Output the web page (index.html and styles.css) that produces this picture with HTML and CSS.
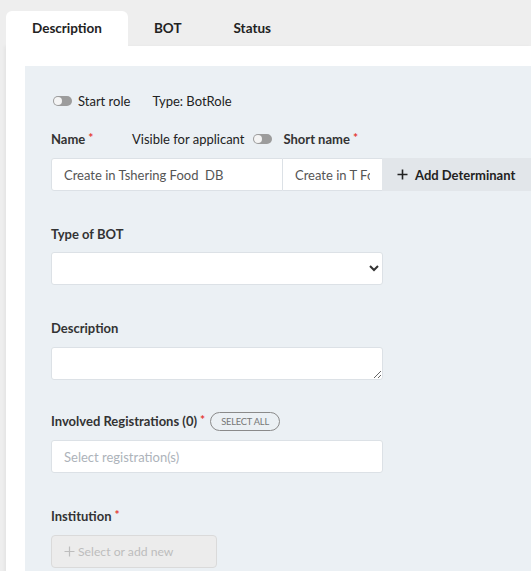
FILE: index.html
```html
<!DOCTYPE html>
<html>
<head>
<meta charset="utf-8">
<link rel="stylesheet" href="styles.css">
</head>
<body>
<div class="tabs">
  <div class="tab active">Description</div>
  <div class="tab">BOT</div>
  <div class="tab">Status</div>
</div>
<div class="card">
  <div class="panel">
    <div class="row toggles">
      <span class="toggle"></span><span class="tlabel">Start role</span>
      <span class="type">Type: BotRole</span>
    </div>
    <div class="row labels2">
      <span class="label l-name">Name<span class="req">*</span></span>
      <span class="vis">Visible for applicant</span><span class="toggle t2"></span>
      <span class="label l-short">Short name<span class="req">*</span></span>
    </div>
    <div class="inputs">
      <input class="inp name" type="text" value="Create in Tshering Food  DB">
      <input class="inp short" type="text" value="Create in T Food DB">
      <button class="adddet"><svg width="11" height="11" viewBox="0 0 11 11"><path d="M5.5 0.5v10M0.5 5.5h10" stroke="#222" stroke-width="1.6"/></svg>Add Determinant</button>
    </div>

    <div class="field f1">
      <div class="label">Type of BOT</div>
      <select class="ctl sel"><option></option></select>
    </div>

    <div class="field f2">
      <div class="label">Description</div>
      <textarea class="ctl ta"></textarea>
    </div>

    <div class="field f3">
      <div class="label">Involved Registrations (0)<span class="req">*</span><span class="pill">SELECT ALL</span></div>
      <input class="ctl inp" type="text" placeholder="Select registration(s)">
    </div>

    <div class="field f4">
      <div class="label">Institution<span class="req">*</span></div>
      <button class="inst"><svg width="11" height="11" viewBox="0 0 11 11"><path d="M5.5 0.5v10M0.5 5.5h10" stroke="#bdbdbd" stroke-width="1.2"/></svg>Select or add new</button>
    </div>
  </div>
</div>
</body>
</html>
```
FILE: styles.css
```css
* { box-sizing: border-box; }
html, body { margin: 0; height: 100%; }
body {
  background: #eeeeee;
  font-family: Lato, "Open Sans", sans-serif;
  font-size: 13px;
  color: #333;
  padding: 11px 0 0 6px;
  overflow: hidden;
}
.tabs { display: flex; height: 35px; }
.tab {
  padding: 0 26px;
  line-height: 35px;
  font-weight: 700;
  font-size: 13.5px;
  color: #222;
}
.tab.active { background: #fff; border-radius: 6px 6px 0 0; }
.card {
  background: #fff;
  height: 600px;
  padding: 20px 0 0 19px;
  box-shadow: -2px 0 3px rgba(0,0,0,0.04);
}
.panel {
  background: #ebf0f4;
  height: 100%;
  padding: 26px 0 0 26px;
}
.row { display: flex; align-items: center; height: 18px; }
.toggle {
  display: inline-block;
  flex-shrink: 0;
  width: 19px; height: 10px;
  border-radius: 5px;
  background: #9c9c9c;
  position: relative;
  margin-left: 2px;
}
.toggle::after {
  content: "";
  position: absolute;
  left: 1px; top: 1px;
  width: 8px; height: 8px;
  border-radius: 50%;
  background: #f4f4f4;
}
.tlabel { margin-left: 6px; color: #222; }
.type { margin-left: 22px; color: #222; }
.labels2 { margin-top: 20px; }
.label { font-weight: 700; color: #333; display: flex; align-items: center; height: 18px; }
.req { color: #e53935; font-size: 12px; margin-left: 3px; position: relative; top: -2px; }
.l-name { width: 81px; flex-shrink: 0; }
.vis { color: #222; }
.t2 { margin-left: 9px; }
.l-short { margin-left: 11px; }
.inputs { display: flex; margin-top: 10px; height: 33px; }
.inp {
  font-family: inherit;
  font-size: 13px;
  color: #555;
  border: 1px solid #dce1e6;
  background: #fff;
  padding: 0 12px;
  height: 33px;
  outline: none;
  flex-shrink: 0;
}
.inp::placeholder { color: #adb3ba; }
.name { width: 232px; border-radius: 3px 0 0 3px; }
.short { width: 99px; border-left: none; border-right: none; }
.adddet {
  flex-shrink: 0;
  font-family: inherit;
  font-size: 13px;
  font-weight: 700;
  color: #222;
  background: #e2e6ea;
  border: none;
  height: 33px;
  width: 160px;
  padding: 0 0 0 15px;
  display: flex;
  align-items: center;
  gap: 7px;
}
.field { margin-top: 34px; }
.field .label { margin-bottom: 9px; }
.ctl {
  display: block;
  width: 332px;
  height: 33px;
  border: 1px solid #dce1e6;
  border-radius: 3px;
  background: #fff;
  font-family: inherit;
  font-size: 13px;
}
.sel { color: #333; padding: 0 6px; }
.ta { height: 33px; resize: vertical; margin: 0; }
.f2 { margin-top: 34px; }
.f2 .label { margin-bottom: 10px; }
.f3 { margin-top: 32px; }
.f3 .label { margin-bottom: 10px; }
.f4 { margin-top: 34px; }
.f4 .label { margin-bottom: 10px; }
.pill {
  margin-left: 5px;
  border: 1px solid #8a8a8a;
  border-radius: 10px;
  height: 19px;
  width: 70px;
  justify-content: center;
  font-size: 9.3px;
  font-weight: 400;
  color: #777;
  display: inline-flex;
  align-items: center;
  letter-spacing: -0.2px;
}
.inst {
  width: 166px;
  height: 33px;
  background: #ececec;
  border: 1px solid #dadada;
  border-radius: 4px;
  font-family: inherit;
  font-size: 12.2px;
  color: #bdbdbd;
  display: flex;
  align-items: center;
  padding: 0 0 0 12px;
  gap: 3px;
}
```
